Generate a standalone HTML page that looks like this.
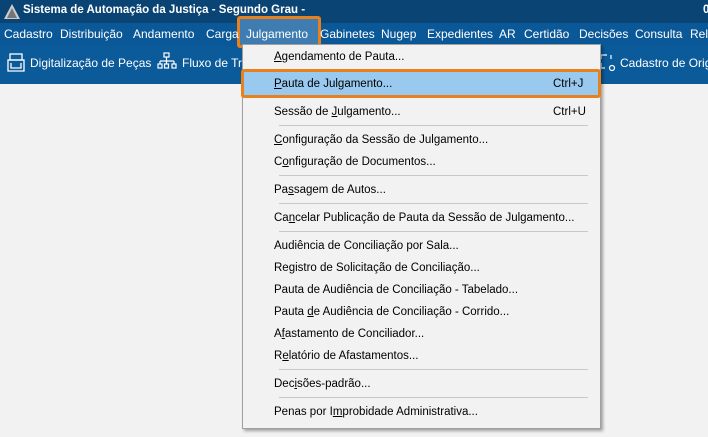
<!DOCTYPE html>
<html><head><meta charset="utf-8"><style>
*{margin:0;padding:0;box-sizing:border-box}
body{width:708px;height:437px;overflow:hidden;background:#f2f2f2;font-family:"Liberation Sans",sans-serif;font-size:12px;position:relative}
.a{position:absolute;white-space:nowrap}
#title{left:0;top:0;width:708px;height:23px;background:#0a4474}
#mb{left:0;top:23px;width:708px;height:23px;background:#0b5898}
#tb{left:0;top:46px;width:708px;height:38px;background:#0b5a9a}
.w{color:#fff}
.m{top:27px;color:#fff;font-size:12px}
#menu{left:242px;top:44px;width:359px;height:385px;background:#f2f2f2;border:1px solid #a0a0a0;box-shadow:2px 2px 3px rgba(0,0,0,.35)}
.i{left:274px;color:#000;font-size:11.5px;margin-top:2px}
.k{left:553px;color:#000;font-size:11.5px;margin-top:2px}
.s{left:279px;width:309px;height:1px;background:#c8c8c8}
u{text-decoration:underline}
</style></head><body>
<div class="a" id="title"></div>
<svg class="a" style="left:4px;top:4px" width="16" height="15"><polygon points="8,0 16,15 0,15" fill="#ccc"/><polygon points="8,4 13,14 3,14" fill="#777"/></svg>
<div class="a w" style="left:23px;top:4px;font-weight:bold;font-size:11.5px">Sistema de Automação da Justiça - Segundo Grau -</div>
<div class="a w" style="left:703px;top:4px;font-weight:bold;font-size:11.5px">0</div>
<div class="a" id="mb"></div>
<div class="a" id="tb"></div>
<div class="a" style="left:237px;top:16px;width:84px;height:32px;border:3px solid #e8801c;border-radius:3px"></div>
<div class="a" style="left:240px;top:19px;width:78px;height:26px;background:#3e7cb2"></div>
<div class="a m" style="left:4px">Cadastro</div>
<div class="a m" style="left:60px">Distribuição</div>
<div class="a m" style="left:133px">Andamento</div>
<div class="a m" style="left:206px">Carga</div>
<div class="a m" style="left:246px">Julgamento</div>
<div class="a m" style="left:320px">Gabinetes</div>
<div class="a m" style="left:381px">Nugep</div>
<div class="a m" style="left:427px">Expedientes</div>
<div class="a m" style="left:499px">AR</div>
<div class="a m" style="left:524px">Certidão</div>
<div class="a m" style="left:579px">Decisões</div>
<div class="a m" style="left:635px">Consulta</div>
<div class="a m" style="left:690px">Rel</div>
<svg class="a" style="left:7px;top:53px" width="18" height="20" fill="none" stroke="#fff" stroke-width="1.3"><rect x="3" y="1" width="12" height="6"/><path d="M1 7h16v11H1z M4 10v5h10v-5"/></svg>
<div class="a w" style="left:30px;top:56px">Digitalização de Peças</div>
<svg class="a" style="left:157px;top:52px" width="20" height="20" fill="none" stroke="#fff" stroke-width="1.2"><rect x="7" y="1" width="5" height="4"/><path d="M9.5 5v4M3 9h14M3 9v3M9.5 9v3M17 9v3"/><rect x="1" y="12" width="4" height="4"/><rect x="7.5" y="12" width="4" height="4"/><rect x="15" y="12" width="4" height="4"/></svg>
<div class="a w" style="left:182px;top:56px">Fluxo de Tra</div>
<svg class="a" style="left:600px;top:53px" width="16" height="20" fill="none" stroke="#fff" stroke-width="1.2"><path d="M1 6V2h6M11 2v4M1 10v5h4"/><circle cx="12" cy="15" r="2.5"/></svg>
<div class="a w" style="left:620px;top:56px">Cadastro de Orig</div>
<div class="a" id="menu"></div>
<div class="a" style="left:241px;top:69px;width:360px;height:29px;border:3px solid #e8801c;border-radius:3px;background:#99c9ef"></div>
<div class="a i" style="top:49px"><u>A</u>gendamento de Pauta...</div>
<div class="a i" style="top:76px"><u>P</u>auta de Julgamento...</div>
<div class="a k" style="top:76px">Ctrl+J</div>
<div class="a i" style="top:104px">Sessão de <u>J</u>ulgamento...</div>
<div class="a k" style="top:104px">Ctrl+U</div>
<div class="a s" style="top:125px"></div>
<div class="a i" style="top:132px"><u>C</u>onfiguração da Sessão de Julgamento...</div>
<div class="a i" style="top:154px">C<u>o</u>nfiguração de Documentos...</div>
<div class="a s" style="top:175px"></div>
<div class="a i" style="top:182px">Pa<u>s</u>sagem de Autos...</div>
<div class="a s" style="top:203px"></div>
<div class="a i" style="top:210px">Ca<u>n</u>celar Publicação de Pauta da Sessão de Julgamento...</div>
<div class="a s" style="top:231px"></div>
<div class="a i" style="top:238px">Audiência de Conciliação por Sala...</div>
<div class="a i" style="top:260px">Registro de Solicitação de Conciliação...</div>
<div class="a i" style="top:282px">Pauta de Audiência de Conciliação - Tabelado...</div>
<div class="a i" style="top:304px">Pauta <u>d</u>e Audiência de Conciliação - Corrido...</div>
<div class="a i" style="top:326px">A<u>f</u>astamento de Conciliador...</div>
<div class="a i" style="top:348px">R<u>e</u>latório de Afastamentos...</div>
<div class="a s" style="top:369px"></div>
<div class="a i" style="top:376px">Dec<u>i</u>sões-padrão...</div>
<div class="a s" style="top:397px"></div>
<div class="a i" style="top:404px">Penas por I<u>m</u>probidade Administrativa...</div>
</body></html>
